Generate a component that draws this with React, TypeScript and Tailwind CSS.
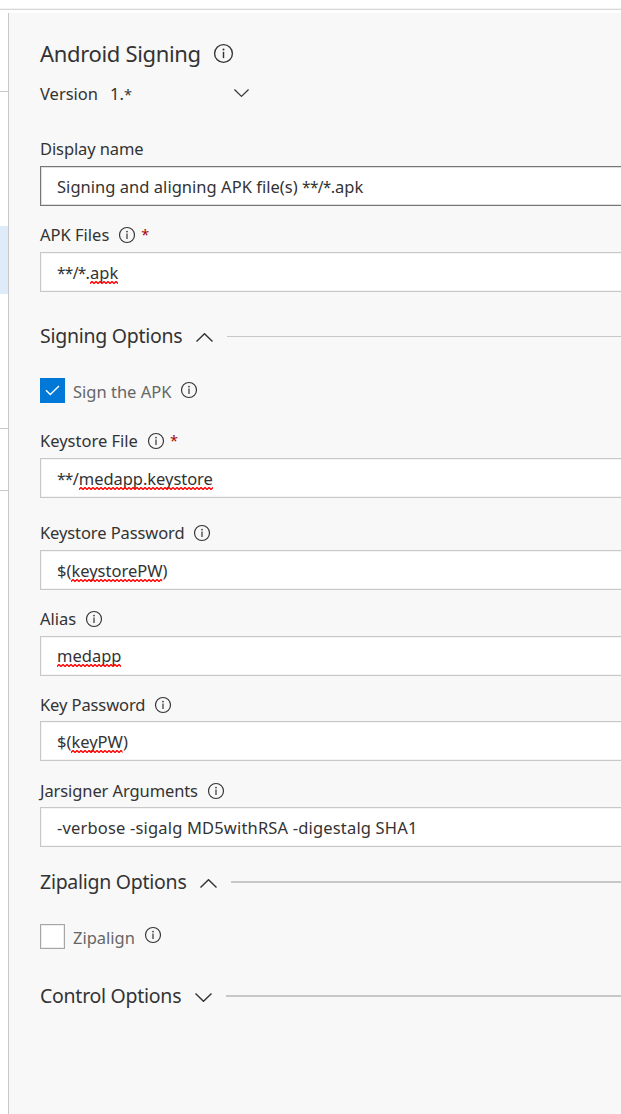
import React from "react";

function InfoIcon({ className = "size-4" }: { className?: string }) {
  return (
    <svg viewBox="0 0 16 16" fill="none" className={`shrink-0 overflow-visible ${className}`}>
      <circle cx="8" cy="8" r="7.5" stroke="#333" strokeWidth="1.15" />
      <path d="M8 6.6v5.3" stroke="#333" strokeWidth="1.2" />
      <circle cx="8" cy="4.6" r="0.85" fill="#333" />
    </svg>
  );
}

function Chevron({ up = false, className = "h-[9px] w-[17px]" }: { up?: boolean; className?: string }) {
  return (
    <svg viewBox="0 0 17 9" fill="none" className={`shrink-0 ${className}`}>
      <path d={up ? "M.5 8.5l8-7.8 8 7.8" : "M.5.5l8 7.8 8-7.8"} stroke="#333" strokeWidth="1.4" />
    </svg>
  );
}

function Misspelled({ id, children }: { id: string; children: React.ReactNode }) {
  return (
    <span className="relative inline-block">
      {children}
      <svg className="absolute bottom-0 left-0 h-[3px] w-full">
        <defs>
          <pattern id={id} width="4" height="3" patternUnits="userSpaceOnUse">
            <path d="M-1 1.5L0 2.5L2 .5L4 2.5L5 1.5" fill="none" stroke="#ff0000" strokeWidth="1.4" />
          </pattern>
        </defs>
        <rect width="100%" height="3" fill={`url(#${id})`} />
      </svg>
    </span>
  );
}

function Glob({ children }: { children: React.ReactNode }) {
  return <span className="text-[15.5px] tracking-[-0.7px]">{children}</span>;
}

type FieldProps = {
  label: string;
  labelClass?: string;
  className: string;
  valueClass?: string;
  info?: boolean;
  required?: boolean;
  active?: boolean;
  tight?: boolean;
  children: React.ReactNode;
};

function Field({ label, labelClass = "", className, valueClass = "pt-[2px]", info = true, required, active, tight, children }: FieldProps) {
  return (
    <div className={className}>
      <div className="flex h-6 items-center">
        <span className={labelClass}>{label}</span>
        {info && <InfoIcon className="ml-[10px] size-4" />}
        {required && <span className="ml-[6px] text-[14.5px] text-[#a80000]">*</span>}
      </div>
      <div
        className={`-mr-1 flex h-10 items-center border bg-white pl-4 ${tight ? "mt-1" : "mt-[5px]"} ${
          active
            ? "border-[#767676] shadow-[inset_0_0_0_1px_#dedede]"
            : "border-[#c8c8c8] shadow-[inset_0_0_0_1px_#f4f4f4]"
        }`}
      >
        <span className={`leading-[22px] ${valueClass}`}>{children}</span>
      </div>
    </div>
  );
}

function Section({ title, up, className, lineClass = "h-[2px]" }: { title: string; up?: boolean; className: string; lineClass?: string }) {
  return (
    <div className={`flex h-8 items-center ${className}`}>
      <span className="text-[19.5px] tracking-[-0.27px]">{title}</span>
      <Chevron up={up} className="mt-[3px] ml-[14px] h-[9px] w-[17px]" />
      <div className={`ml-[14px] grow bg-[#c8c8c8] ${lineClass}`} />
    </div>
  );
}

export default function App() {
  return (
    <div className="flex h-[1114px] w-[621px] flex-col overflow-hidden whitespace-nowrap bg-white font-['Noto_Sans',sans-serif] text-[16.5px] text-[#333]">
      <div className="mb-[3px] h-[10px] shrink-0 border-b border-[#d6d6d6] shadow-[inset_0_-1px_0_#f4f4f4]" />
      <div className="flex grow">
        <div className="flex w-2 shrink-0 flex-col">
          <div className="h-[79px] border-b border-[#c8c8c8]" />
          <div className="mt-[134px] h-[68px] bg-[#deecf9]" />
          <div className="h-[135px] border-b border-[#c8c8c8]" />
          <div className="h-[62px] border-b border-[#c8c8c8]" />
        </div>
        <div className="grow border-l border-[#c8c8c8] bg-[#f8f8f8] pt-[20px] pl-[31px]">
          <div className="flex h-10 items-center">
            <span className="text-[22px] tracking-[-0.33px]">Android Signing</span>
            <InfoIcon className="ml-[13px] size-[19px]" />
          </div>
          <div className="mt-[9px] flex h-6 items-center">
            <span className="w-[70px]">Version</span>
            <span className="w-[124px]">1.<span className="text-[14.5px]">*</span></span>
            <Chevron className="mb-[2px] h-2 w-[15px]" />
          </div>

          <Field className="mt-[31px]" label="Display name" labelClass="tracking-[-0.1px]" info={false} active>
            <span className="tracking-[0.03px]">Signing and aligning APK file(s) </span>
            <Glob>**/*</Glob>.apk
          </Field>
          <Field className="mt-[17px]" label="APK Files" required>
            <Glob>**/*</Glob>.<Misspelled id="w1">apk</Misspelled>
          </Field>

          <Section className="mt-7" title="Signing Options" up lineClass="h-px" />
          <div className="mt-[26px] flex h-[25px] items-center text-[#666]">
            <div className="flex size-[25px] items-center justify-center bg-[#0078d7]">
              <svg viewBox="0 0 15 11" className="h-[11px] w-[15px]" fill="none">
                <path d="M1 5.2l4.3 4.3L14 1" stroke="#fff" strokeWidth="1.4" />
              </svg>
            </div>
            <span className="ml-2 pt-[3px]">Sign the APK</span>
            <InfoIcon className="mb-[2px] ml-[10px] size-4" />
          </div>

          <Field className="mt-[26px]" label="Keystore File" required>
            <Glob>**</Glob>/<Misspelled id="w2"><span className="tracking-[-0.05px]">medapp.keystore</span></Misspelled>
          </Field>
          <Field className="mt-[23px]" label="Keystore Password" labelClass="tracking-[-0.1px]">
            $(<Misspelled id="w3">keystorePW</Misspelled>)
          </Field>
          <Field className="mt-[17px]" label="Alias" valueClass="">
            <Misspelled id="w4">medapp</Misspelled>
          </Field>
          <Field className="mt-[17px]" label="Key Password" labelClass="tracking-[-0.1px]" tight>
            $(<Misspelled id="w5">keyPW</Misspelled>)
          </Field>
          <Field className="mt-[18px]" label="Jarsigner Arguments" labelClass="tracking-[-0.1px]" tight>
            <span className="tracking-[0.17px]">-verbose -sigalg MD5withRSA -digestalg SHA1</span>
          </Field>

          <Section className="mt-[19px]" title="Zipalign Options" up />
          <div className="mt-[26px] flex h-[25px] items-center text-[#666]">
            <div className="size-[25px] border border-[#a6a6a6] bg-white shadow-[inset_0_0_0_1px_#ededed]" />
            <span className="ml-2 pt-[3px]">Zipalign</span>
            <InfoIcon className="mb-1 ml-[10px] size-4" />
          </div>
          <Section className="mt-[31px]" title="Control Options" />
        </div>
      </div>
    </div>
  );
}
